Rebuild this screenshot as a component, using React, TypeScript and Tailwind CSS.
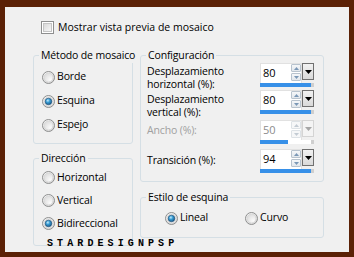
import React, { useId } from "react";

function Radio({ checked = false }: { checked?: boolean }) {
  const id = useId().replace(/:/g, "");
  return (
    <svg width="13" height="13" viewBox="0 0 13 13" className="shrink-0">
      <defs>
        <radialGradient id={`bg${id}`} cx="35%" cy="30%" r="80%">
          <stop offset="0%" stopColor="#ffffff" />
          <stop offset="100%" stopColor="#d2d2d2" />
        </radialGradient>
        <radialGradient id={`in${id}`} cx="70%" cy="75%" r="80%">
          <stop offset="0%" stopColor="#fbfbfb" />
          <stop offset="100%" stopColor="#dcdcdc" />
        </radialGradient>
        <radialGradient id={`dot${id}`} cx="40%" cy="35%" r="70%">
          <stop offset="0%" stopColor="#c8ecfb" />
          <stop offset="40%" stopColor="#3a9fd6" />
          <stop offset="100%" stopColor="#15507f" />
        </radialGradient>
      </defs>
      <circle cx="6.5" cy="6.5" r="6" fill={`url(#bg${id})`} stroke="#8e8f8f" />
      <circle cx="6.5" cy="6.5" r="4.5" fill={`url(#in${id})`} stroke="#d4d4d4" strokeWidth="0.8" />
      {checked && <circle cx="6.5" cy="6.5" r="3.3" fill={`url(#dot${id})`} stroke="#1b4f78" strokeWidth="0.6" />}
    </svg>
  );
}

function Checkbox() {
  return (
    <div className="w-[13px] h-[13px] border border-[#8e8f8f] bg-white p-[1px] shrink-0">
      <div className="w-full h-full border border-[#c4c4c4] bg-gradient-to-br from-[#d9d9d9] to-[#f7f7f7]" />
    </div>
  );
}

function SpinButton({ up, disabled }: { up?: boolean; disabled?: boolean }) {
  const color = disabled ? "#c3cbd3" : "#7b98b6";
  return (
    <div
      className={`h-[8px] flex items-center justify-center rounded-[1px] border ${
        disabled ? "border-[#dde2e6] bg-[#f6f7f8]" : "border-[#b8c3ce] bg-gradient-to-b from-[#f5f7f9] to-[#e2e7ec]"
      }`}
    >
      <svg width="5" height="3" viewBox="0 0 5 3">
        <polygon points={up ? "0,3 5,3 2.5,0" : "0,0 5,0 2.5,3"} fill={color} />
      </svg>
    </div>
  );
}

function Spin({ value, fill, disabled }: { value: string; fill: number; disabled?: boolean }) {
  return (
    <div className="w-[54px] flex flex-col shrink-0">
      <div className="flex h-[20px]">
        <div className="w-[42px] flex bg-white border border-[#e1e1e1] border-b-0">
          <span className={`flex-1 pl-[2px] leading-[18px] text-[11px] tracking-normal ${disabled ? "text-[#8c8c8c]" : "text-black"}`}>
            {value}
          </span>
          <div className="w-[10px] flex flex-col gap-[1px]">
            <SpinButton up disabled={disabled} />
            <SpinButton disabled={disabled} />
          </div>
        </div>
        <div
          className={`w-[12px] h-[17px] flex items-center justify-center border ${
            disabled ? "border-[#d4d4d4] bg-[#f4f4f4]" : "border-[#707070] bg-gradient-to-b from-[#f2f2f2] to-[#d9d9d9]"
          }`}
        >
          <svg width="7" height="4" viewBox="0 0 7 4">
            <polygon points="0,0 7,0 3.5,4" fill={disabled ? "#a6a6a6" : "#000"} />
          </svg>
        </div>
      </div>
      <div className="h-[4px] flex bg-white">
        <div className="bg-[#3790e8]" style={{ width: fill }} />
        <div className="flex-1" />
        <div className="w-[3px] bg-[#cfcfcf]" />
      </div>
    </div>
  );
}

function Group({
  title,
  className = "",
  children,
}: {
  title: string;
  className?: string;
  children: React.ReactNode;
}) {
  return (
    <fieldset className={`min-w-0 border border-[#d5dfe5] rounded-[3px] px-[5px] ${className}`}>
      <legend className="px-[2px] leading-[16px] whitespace-nowrap">{title}</legend>
      {children}
    </fieldset>
  );
}

function RadioRow({ label, checked, className = "" }: { label: string; checked?: boolean; className?: string }) {
  return (
    <div className={`flex items-center gap-[2px] whitespace-nowrap ${className}`}>
      <Radio checked={checked} />
      <span>{label}</span>
    </div>
  );
}

export default function App() {
  return (
    <div className="w-[354px] h-[257px] bg-[#5b2106] pt-[7px] px-[5px] pb-[5px] font-['Open_Sans',sans-serif] text-[10.5px] tracking-[-0.15px] text-black">
      <div className="relative h-full bg-[#f0f0f0] pl-[28px] pt-[14px]">
        {/* preview checkbox */}
        <div className="flex items-center gap-[4px] ml-[8px] h-[13px]">
          <Checkbox />
          <span className="tracking-normal">Mostrar vista previa de mosaico</span>
        </div>

        <div className="flex gap-[7px] mt-[13px]">
          {/* left column */}
          <div className="w-[100px] flex flex-col">
            <Group title="Método de mosaico" className="pt-[2px] pb-[6px]">
              <RadioRow label="Borde" className="h-[24px] ml-[3px]" />
              <RadioRow label="Esquina" checked className="h-[24px] ml-[3px]" />
              <RadioRow label="Espejo" className="h-[24px] ml-[3px]" />
            </Group>
            <Group title="Dirección" className="mt-[6px] pb-[10px]">
              <RadioRow label="Horizontal" className="h-[23px] ml-[3px]" />
              <RadioRow label="Vertical" className="h-[23px] ml-[3px]" />
              <RadioRow label="Bidireccional" checked className="h-[23px] ml-[3px]" />
            </Group>
          </div>

          {/* right column */}
          <div className="w-[184px] flex flex-col">
            <Group title="Configuración" className="pb-[8px]">
              <div className="mr-[4px] ml-[1px]">
                <div className="flex justify-between h-[24px]">
                  <div className="pt-[2px] leading-[13px]">
                    Desplazamiento
                    <br />
                    horizontal (%):
                  </div>
                  <Spin value="80" fill={51} />
                </div>
                <div className="flex justify-between h-[24px] mt-[3px]">
                  <div className="pt-[3px] leading-[13px]">
                    Desplazamiento
                    <br />
                    vertical (%):
                  </div>
                  <Spin value="80" fill={51} />
                </div>
                <div className="flex justify-between items-center h-[24px] mt-[6px]">
                  <span className="text-[#a0a0a0] -mt-[2px]">Ancho (%):</span>
                  <Spin value="50" fill={28} disabled />
                </div>
                <div className="flex justify-between items-center h-[24px] mt-[5px]">
                  <span>Transición (%):</span>
                  <Spin value="94" fill={51} />
                </div>
              </div>
            </Group>
            <Group title="Estilo de esquina" className="mt-[7px] pb-[6px]">
              <div className="flex items-center h-[26px] ml-[19px]">
                <RadioRow label="Lineal" checked className="w-[80px]" />
                <RadioRow label="Curvo" />
              </div>
            </Group>
          </div>
        </div>

        {/* watermark */}
        <div className="absolute left-[42px] top-[232px] font-['Liberation_Mono',monospace] font-bold text-[10px] leading-[10px] tracking-[4.1px] text-black">
          STARDESIGNPSP
        </div>
      </div>
    </div>
  );
}
